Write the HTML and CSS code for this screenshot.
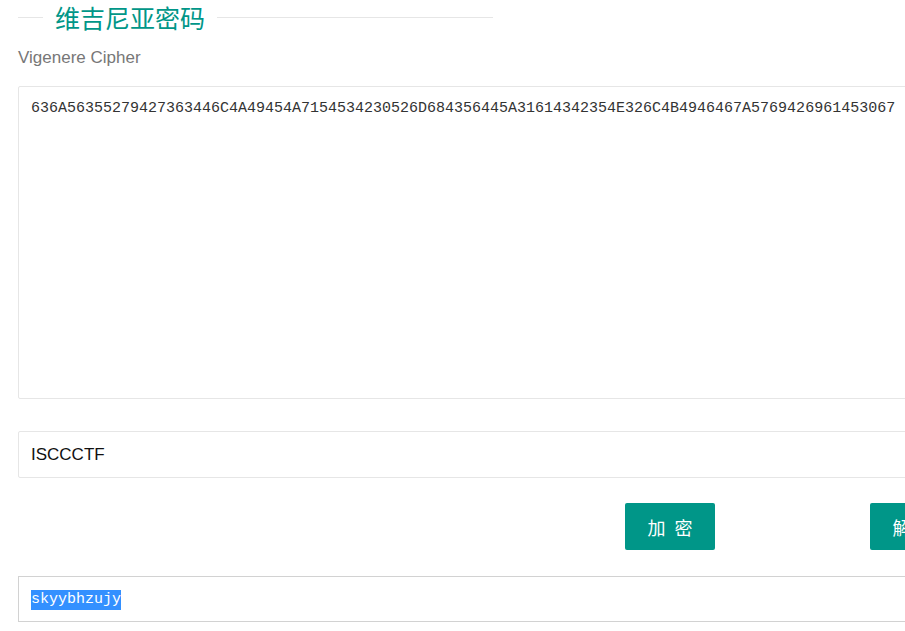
FILE: index.html
```html
<!DOCTYPE html>
<html lang="zh-CN">
<head>
<meta charset="utf-8">
<title>维吉尼亚密码</title>
<link rel="stylesheet" href="styles.css">
</head>
<body>
<div class="page">
  <fieldset class="title-field">
    <legend class="title">维吉尼亚密码</legend>
  </fieldset>
  <p class="subtitle">Vigenere Cipher</p>
  <textarea class="cipher-text" spellcheck="false">636A56355279427363446C4A49454A7154534230526D684356445A31614342354E326C4B4946467A5769426961453067</textarea>
  <div class="key-input">ISCCCTF</div>
  <div class="btn-row">
    <button class="btn"><span>加</span><span>密</span></button>
    <button class="btn"><span>解</span><span>密</span></button>
  </div>
  <div class="result"><span class="selected">skyybhzujy</span></div>
</div>
</body>
</html>
```
FILE: styles.css
```css
html, body {
  margin: 0;
  padding: 0;
  overflow: hidden;
  background: #fff;
}
.page {
  width: 1100px;
  padding: 0 18px;
  font-family: "Liberation Sans", Arial, sans-serif;
}
.title-field {
  width: 475px;
  margin: 0;
  padding: 0;
  border: none;
  border-top: 1px solid #e6e6e6;
  box-sizing: border-box;
}
.title {
  margin-left: 25px;
  padding: 0 12px;
  font-family: "Noto Sans CJK SC", sans-serif;
  font-size: 25px;
  line-height: 34px;
  color: #009688;
}
.subtitle {
  margin: 12px 0 0;
  font-size: 17px;
  line-height: 24px;
  color: #777;
}
.cipher-text {
  display: block;
  box-sizing: border-box;
  width: 1000px;
  height: 313px;
  margin: 16px 0 0;
  padding: 12px 12px 10px;
  border: 1px solid #e6e6e6;
  border-radius: 2px;
  resize: none;
  outline: none;
  font-family: "Liberation Mono", monospace;
  font-size: 15px;
  line-height: 20px;
  color: #333;
}
.key-input {
  box-sizing: border-box;
  width: 1000px;
  height: 47px;
  margin-top: 32px;
  padding: 0 12px;
  display: flex;
  align-items: center;
  border: 1px solid #e6e6e6;
  border-radius: 2px;
  font-size: 17px;
  color: #111;
}
.btn-row {
  display: flex;
  gap: 155px;
  margin-top: 25px;
  padding-left: 607px;
}
.btn {
  width: 90px;
  height: 47px;
  display: flex;
  align-items: center;
  justify-content: center;
  gap: 9px;
  padding: 0;
  border: none;
  border-radius: 2px;
  background: #009688;
  color: #fff;
  font-family: "Noto Sans CJK SC", sans-serif;
  font-size: 18px;
  flex-shrink: 0;
}
.result {
  box-sizing: border-box;
  width: 1000px;
  height: 46px;
  margin-top: 26px;
  padding: 2px 12px 0;
  display: flex;
  align-items: center;
  border: 1px solid #d2d2d2;
  font-family: "Liberation Mono", monospace;
  font-size: 15px;
  line-height: 20px;
}
.selected {
  background: #3390ff;
  color: #fff;
}
```
